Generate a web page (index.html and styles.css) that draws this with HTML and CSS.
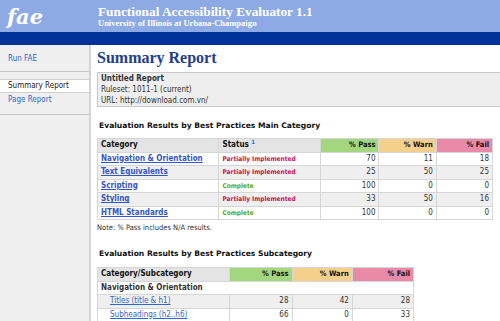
FILE: index.html
```html
<!DOCTYPE html>
<html lang="en">
<head>
    <meta charset="UTF-8">
    <title>FAE - Summary Report</title>
    <link rel="stylesheet" href="styles.css">
</head>
<body>
    <!-- Banner -->
    <div class="banner">
        <div class="logo">fae</div>
        <div class="titles">
            <div class="app-title">Functional Accessibility Evaluator 1.1</div>
            <div class="app-sub">University of Illinois at Urbana-Champaign</div>
        </div>
    </div>
    <div class="bar"></div>

    <div class="layout">
        <!-- Navegação -->
        <div class="sidebar">
            <div class="nav-group">
                <a href="#" class="nav-link">Run FAE</a>
            </div>
            <div class="nav-group">
                <div class="nav-current">Summary Report</div>
                <a href="#" class="nav-link">Page Report</a>
            </div>
        </div>

        <!-- Conteúdo -->
        <div class="content">
            <h1>Summary Report</h1>
            <div class="info-box">
                <div class="info-title">Untitled Report</div>
                <div>Ruleset: 1011-1 (current)</div>
                <div>URL: http://download.com.vn/</div>
            </div>

            <h2>Evaluation Results by Best Practices Main Category</h2>
            <table class="results main-table">
                <tr>
                    <th class="col-cat">Category</th>
                    <th class="col-status">Status <sup>1</sup></th>
                    <th class="num pass">% Pass</th>
                    <th class="num warn">% Warn</th>
                    <th class="num fail">% Fail</th>
                </tr>
                <tr>
                    <td><a href="#" class="cat-link">Navigation &amp; Orientation</a></td>
                    <td class="partial">Partially Implemented</td>
                    <td class="num">70</td><td class="num">11</td><td class="num">18</td>
                </tr>
                <tr class="alt">
                    <td><a href="#" class="cat-link">Text Equivalents</a></td>
                    <td class="partial">Partially Implemented</td>
                    <td class="num">25</td><td class="num">50</td><td class="num">25</td>
                </tr>
                <tr>
                    <td><a href="#" class="cat-link">Scripting</a></td>
                    <td class="complete">Complete</td>
                    <td class="num">100</td><td class="num">0</td><td class="num">0</td>
                </tr>
                <tr class="alt">
                    <td><a href="#" class="cat-link">Styling</a></td>
                    <td class="partial">Partially Implemented</td>
                    <td class="num">33</td><td class="num">50</td><td class="num">16</td>
                </tr>
                <tr>
                    <td><a href="#" class="cat-link">HTML Standards</a></td>
                    <td class="complete">Complete</td>
                    <td class="num">100</td><td class="num">0</td><td class="num">0</td>
                </tr>
            </table>
            <p class="note">Note: % Pass includes N/A results.</p>

            <h2 class="sub-heading">Evaluation Results by Best Practices Subcategory</h2>
            <table class="results sub-table">
                <tr>
                    <th class="col-sub">Category/Subcategory</th>
                    <th class="num pass">% Pass</th>
                    <th class="num warn">% Warn</th>
                    <th class="num fail">% Fail</th>
                </tr>
                <tr>
                    <td class="group" colspan="4">Navigation &amp; Orientation</td>
                </tr>
                <tr class="alt">
                    <td class="sub"><a href="#">Titles (title &amp; h1)</a></td>
                    <td class="num">28</td><td class="num">42</td><td class="num">28</td>
                </tr>
                <tr>
                    <td class="sub"><a href="#">Subheadings (h2..h6)</a></td>
                    <td class="num">66</td><td class="num">0</td><td class="num">33</td>
                </tr>
            </table>
        </div>
    </div>
</body>
</html>
```

FILE: styles.css
```css
/* CSS */
body {
    font-family: Tahoma, "DejaVu Sans Condensed", "DejaVu Sans", sans-serif;
    font-size: 8px;
    margin: 0;
    padding: 0;
    background-color: #ffffff;
    color: #333;
    overflow: hidden;
}

.banner {
    height: 32px;
    background-color: #8eaae4;
    display: flex;
    align-items: center;
    color: #ffffff;
}

.logo {
    width: 90px;
    padding-left: 7px;
    box-sizing: border-box;
    font-family: "DejaVu Serif", Georgia, serif;
    font-style: italic;
    font-weight: bold;
    font-size: 21px;
    line-height: 1;
}

.titles {
    padding-left: 8px;
    font-family: "Liberation Serif", Georgia, serif;
    font-weight: bold;
}

.app-title {
    font-size: 13.3px;
    line-height: 15px;
}

.app-sub {
    font-size: 8.5px;
    line-height: 9px;
}

.bar {
    height: 13px;
    background-color: #00339a;
}

.layout {
    display: flex;
    min-height: 300px;
}

.sidebar {
    width: 89px;
    background-color: #efefef;
    border-right: 2px solid #d4d4d4;
    flex-shrink: 0;
}

.nav-group {
    border-bottom: 1px solid #c4c4c4;
    padding: 7px 0 8px;
}

.nav-group:first-child {
    padding: 7px 0 6px;
}

.nav-link {
    display: block;
    padding: 1px 8px;
    line-height: 11px;
    color: #3366cc;
    text-decoration: none;
}

.nav-current {
    background-color: #ffffff;
    border-top: 1px solid #d0d0d0;
    border-bottom: 1px solid #d0d0d0;
    padding: 0 8px;
    line-height: 12px;
    color: #222;
}

.content {
    flex: 1;
    padding: 0 0 0 6px;
}

h1 {
    font-family: "Liberation Serif", Georgia, serif;
    font-size: 16px;
    color: #23408e;
    margin: 4px 0 5px;
    line-height: 18px;
}

.info-box {
    background-color: #eeeeee;
    border: 1px solid #c8c8c8;
    padding: 0 3px;
    line-height: 11px;
    margin-right: -12px;
}

.info-title {
    font-weight: bold;
}

h2 {
    font-family: "DejaVu Sans", Verdana, sans-serif;
    font-size: 7.6px;
    color: #111;
    margin: 13px 0 6px 2px;
    line-height: 12px;
}

h2.sub-heading {
    margin: 15px 0 7px 2px;
}

.results {
    border-collapse: collapse;
    border: 1px solid #cccccc;
}

.results th,
.results td {
    border: 1px solid #d6d6d6;
    padding: 0 3px;
    height: 12.5px;
    line-height: 12px;
    text-align: left;
}

.results th {
    background-color: #e4e4e4;
    color: #111;
}

.results sup {
    color: #3366cc;
    font-size: 6px;
    vertical-align: top;
    line-height: 6px;
}

.results tr.alt td {
    background-color: #efefef;
}

.results .num {
    text-align: right;
}

.results th.num {
    font-size: 7.5px;
}

.results th.pass {
    background-color: #a3d77f;
}

.results th.warn {
    background-color: #f5d08c;
}

.results th.fail {
    background-color: #e98aa8;
}

.main-table {
    width: 396px;
}

.main-table .col-cat { width: 116px; }
.main-table .col-status { width: 96px; }
.main-table th.pass { width: 52px; }
.main-table th.warn { width: 51px; }
.main-table th.fail { width: 50px; }

.cat-link {
    color: #3355cc;
    font-weight: bold;
}

.partial {
    color: #cc1155;
    font-weight: bold;
    font-size: 6.5px;
}

.complete {
    color: #55aa11;
    font-weight: bold;
    font-size: 6.5px;
}

.note {
    margin: 3px 0 0;
    font-size: 7.5px;
    line-height: 10px;
    color: #333;
}

.sub-table {
    width: 317px;
}

.sub-table .col-sub { width: 126px; }
.sub-table th.pass { width: 56px; }
.sub-table th.warn { width: 54px; }
.sub-table th.fail { width: 55px; }

.results td.group {
    font-weight: bold;
    background-color: #ffffff;
}

.results td.sub {
    padding-left: 12px;
}

.sub a {
    color: #3366cc;
}
```
